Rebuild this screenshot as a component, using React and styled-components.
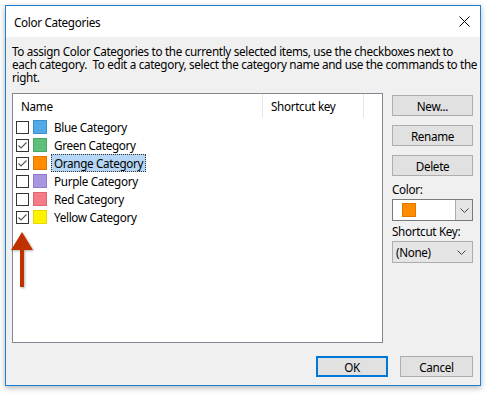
import React from "react";
import styled, { createGlobalStyle } from "styled-components";

const GlobalStyle = createGlobalStyle`
  html, body {
    margin: 0;
    padding: 0;
    background: #ffffff;
  }
  body {
    font-family: "Segoe UI", "Noto Sans", "Liberation Sans", sans-serif;
    font-size: 11.7px;
    letter-spacing: -0.33px;
    color: #000;
  }
`;

const Page = styled.div`
  width: 490px;
  height: 395px;
  padding: 5px 0 0 5px;
  box-sizing: border-box;
`;

const Window = styled.div`
  width: 476px;
  height: 381px;
  box-sizing: border-box;
  border: 1px solid #1c7fd4;
  background: #f0f0f0;
  display: flex;
  flex-direction: column;
  box-shadow: 0 2px 6px rgba(0, 0, 0, 0.3);
`;

const TitleBar = styled.div`
  height: 31px;
  background: #ffffff;
  display: flex;
  align-items: center;
  justify-content: space-between;
  padding: 0 10px 0 8px;
`;

const Body = styled.div`
  flex: 1;
  display: flex;
  flex-direction: column;
  padding: 8px 7px 8px 6px;
`;

const Desc = styled.div`
  margin: 0 0 9px;
  line-height: 13px;
  white-space: nowrap;
`;

const Main = styled.div`
  display: flex;
  gap: 9px;
`;

const ListBox = styled.div`
  position: relative;
  width: 372px;
  height: 250px;
  box-sizing: border-box;
  border: 1px solid #828790;
  background: #ffffff;
`;

const HeaderRow = styled.div`
  display: grid;
  grid-template-columns: 250px 101px;
  height: 24px;
`;

const HeaderCell = styled.div`
  display: flex;
  align-items: center;
  padding-left: 8px;
  border-right: 1px solid #e5e5e5;
`;

const Row = styled.div`
  display: flex;
  align-items: center;
  height: 18px;
  padding-left: 3px;
`;

const Check = styled.span`
  width: 13px;
  height: 13px;
  box-sizing: border-box;
  border: 1px solid #333333;
  background: #fff;
  display: flex;
  align-items: center;
  justify-content: center;
`;

const Swatch = styled.span`
  width: ${({ $size }) => $size || 14}px;
  height: ${({ $size }) => $size || 14}px;
  box-sizing: border-box;
  background: ${({ $color }) => $color};
  border: 1px solid ${({ $edge }) => $edge};
  margin-left: ${({ $gap }) => $gap ?? 4}px;
`;

const Label = styled.span`
  margin-left: 4px;
  padding: 0 2px;
  height: 18px;
  line-height: 17px;
  box-sizing: border-box;
  border: 1px dotted ${({ $selected }) => ($selected ? "#333" : "transparent")};
  background: ${({ $selected }) => ($selected ? "#b5d6f5" : "transparent")};
`;

const Arrow = styled.svg`
  position: absolute;
  left: -3px;
  top: 137px;
`;

const Side = styled.div`
  width: 81px;
  display: flex;
  flex-direction: column;
  padding-top: 2px;
`;

const Button = styled.button`
  width: ${({ $w }) => $w || 81}px;
  height: 21px;
  box-sizing: border-box;
  background: #e1e1e1;
  border: ${({ $primary }) => ($primary ? "2px solid #0078d7" : "1px solid #adadad")};
  font-family: inherit;
  font-size: inherit;
  letter-spacing: inherit;
  color: #000;
  padding: 0;
  margin-bottom: ${({ $mb }) => $mb ?? 0}px;
`;

const FieldLabel = styled.div`
  height: 20px;
  display: flex;
  align-items: center;
`;

const Combo = styled.div`
  height: 22px;
  box-sizing: border-box;
  border: 1px solid ${({ $flat }) => ($flat ? "#adadad" : "#7a7a7a")};
  background: ${({ $flat }) => ($flat ? "#e5e5e5" : "#ffffff")};
  display: flex;
  align-items: center;
`;

const ComboValue = styled.div`
  flex: 1;
  display: flex;
  align-items: center;
  padding-left: ${({ $pad }) => $pad}px;
`;

const DropBtn = styled.div`
  width: 17px;
  height: 100%;
  box-sizing: border-box;
  display: flex;
  align-items: center;
  justify-content: center;
  background: ${({ $flat }) => ($flat ? "transparent" : "#e5e5e5")};
  border-left: ${({ $flat }) => ($flat ? "none" : "1px solid #adadad")};
  margin-right: ${({ $flat }) => ($flat ? 2 : 0)}px;
`;

const Footer = styled.div`
  margin-top: auto;
  display: flex;
  justify-content: flex-end;
  gap: 12px;
`;

const Chevron = () => (
  <svg width="9" height="5" viewBox="0 0 9 5">
    <path d="M0.5 0.5 L4.5 4.5 L8.5 0.5" fill="none" stroke="#444" strokeWidth="1" />
  </svg>
);

const Tick = () => (
  <svg width="11" height="11" viewBox="0 0 11 11">
    <path d="M1.5 5.5 L4 8 L9.5 2.5" fill="none" stroke="#555" strokeWidth="1.1" />
  </svg>
);

const categories = [
  { name: "Blue Category", color: "#52a9e8", edge: "#3b8fd0", checked: false },
  { name: "Green Category", color: "#5ebe7a", edge: "#47a864", checked: true },
  { name: "Orange Category", color: "#ff8c00", edge: "#e07600", checked: true, selected: true },
  { name: "Purple Category", color: "#a996e2", edge: "#8f7bcc", checked: false },
  { name: "Red Category", color: "#f37c86", edge: "#dd6670", checked: false },
  { name: "Yellow Category", color: "#fff200", edge: "#e8d700", checked: true },
];

export default function App() {
  return (
    <>
      <GlobalStyle />
      <Page>
        <Window>
          <TitleBar>
            <span>Color Categories</span>
            <svg width="11" height="11" viewBox="0 0 11 11">
              <path d="M0.5 0.5 L10.5 10.5 M10.5 0.5 L0.5 10.5" stroke="#000" strokeWidth="1" />
            </svg>
          </TitleBar>
          <Body>
            <Desc>
              To assign Color Categories to the currently selected items, use the checkboxes next to
              <br />
              each category.&nbsp; To edit a category, select the category name and use the commands to the
              <br />
              right.
            </Desc>
            <Main>
              <ListBox>
                <HeaderRow>
                  <HeaderCell>Name</HeaderCell>
                  <HeaderCell>Shortcut key</HeaderCell>
                </HeaderRow>
                {categories.map((c) => (
                  <Row key={c.name}>
                    <Check>{c.checked && <Tick />}</Check>
                    <Swatch $color={c.color} $edge={c.edge} />
                    <Label $selected={c.selected}>{c.name}</Label>
                  </Row>
                ))}
                <Arrow width="28" height="60" viewBox="0 0 28 60">
                  <defs>
                    <filter id="sh" x="-30%" y="-10%" width="160%" height="130%">
                      <feDropShadow dx="1" dy="1" stdDeviation="0.8" floodColor="#000" floodOpacity="0.3" />
                    </filter>
                  </defs>
                  <polygon
                    points="12,1 23,19 14,19 14,56 10,56 10,19 1,19"
                    fill="#bf3300"
                    filter="url(#sh)"
                  />
                </Arrow>
              </ListBox>
              <Side>
                <Button $mb={9}>New...</Button>
                <Button $mb={9}>Rename</Button>
                <Button $mb={3}>Delete</Button>
                <FieldLabel>Color:</FieldLabel>
                <Combo>
                  <ComboValue $pad={9}>
                    <Swatch $color="#ff8c00" $edge="#e07600" $gap={0} />
                  </ComboValue>
                  <DropBtn>
                    <Chevron />
                  </DropBtn>
                </Combo>
                <FieldLabel>Shortcut Key:</FieldLabel>
                <Combo $flat>
                  <ComboValue $pad={3}>(None)</ComboValue>
                  <DropBtn $flat>
                    <Chevron />
                  </DropBtn>
                </Combo>
              </Side>
            </Main>
            <Footer>
              <Button $primary $w={72}>OK</Button>
              <Button $w={73}>Cancel</Button>
            </Footer>
          </Body>
        </Window>
      </Page>
    </>
  );
}
